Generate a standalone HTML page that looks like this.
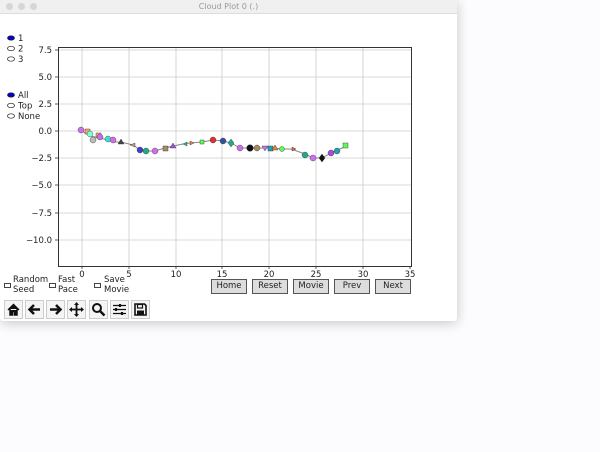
<!DOCTYPE html>
<html><head><style>
body{margin:0;width:600px;height:452px;background:#fcfcfe;font-family:"DejaVu Sans","Liberation Sans",sans-serif;overflow:hidden;position:relative}
.win{position:absolute;left:0;top:0;width:457px;height:321px;background:#fff;box-shadow:0 2px 12px rgba(0,0,0,.22);border-radius:0 0 3px 3px}
.tb{height:13px;background:#f0f0f0;border-bottom:1px solid #ddd;font-size:8px;color:#999;text-align:center;line-height:13px;position:relative}
.dot{position:absolute;top:3px;width:7px;height:7px;border-radius:50%;background:#d6d6d6}
.t{position:absolute;font-size:8.5px;color:#222;line-height:9.5px}
.btn{position:absolute;top:279px;height:15px;width:36px;background:#ddd;border:1px solid #555;box-sizing:border-box;font-size:8.5px;text-align:center;line-height:13px;color:#222}
.ic{position:absolute;top:300px;width:19px;height:19px;border:1px solid #ccc;box-sizing:border-box;background:#f4f4f4}
.cb{position:absolute;width:5px;height:3px;border:1px solid #444}
</style></head><body>
<div class="win">
<div class="tb"><span class="dot" style="left:6px"></span><span class="dot" style="left:18px"></span><span class="dot" style="left:30px"></span>Cloud Plot 0 (.)</div>
<svg width="457" height="300" style="position:absolute;left:0;top:0" font-family="DejaVu Sans, Liberation Sans, sans-serif" font-size="8.5" fill="#222">
<g fill="#0000cc" stroke="#222" stroke-width="0.7">
<ellipse cx="11" cy="38" rx="3.5" ry="2.2"/><ellipse cx="11" cy="48.5" rx="3.5" ry="2.2" fill="#fff"/><ellipse cx="11" cy="59" rx="3.5" ry="2.2" fill="#fff"/>
<ellipse cx="11" cy="95" rx="3.5" ry="2.2"/><ellipse cx="11" cy="105.5" rx="3.5" ry="2.2" fill="#fff"/><ellipse cx="11" cy="116" rx="3.5" ry="2.2" fill="#fff"/>
</g>
<text x="18" y="41">1</text><text x="18" y="51.5">2</text><text x="18" y="62">3</text>
<text x="18" y="98">All</text><text x="18" y="108.5">Top</text><text x="18" y="119">None</text>
<g stroke="#ccc" stroke-width="0.8">
<line x1="82" y1="47" x2="82" y2="266"/><line x1="129" y1="47" x2="129" y2="266"/><line x1="176" y1="47" x2="176" y2="266"/><line x1="222" y1="47" x2="222" y2="266"/><line x1="269" y1="47" x2="269" y2="266"/><line x1="316" y1="47" x2="316" y2="266"/><line x1="363" y1="47" x2="363" y2="266"/>
<line x1="58" y1="50" x2="412" y2="50"/><line x1="58" y1="77" x2="412" y2="77"/><line x1="58" y1="104" x2="412" y2="104"/><line x1="58" y1="131" x2="412" y2="131"/><line x1="58" y1="158" x2="412" y2="158"/><line x1="58" y1="185" x2="412" y2="185"/><line x1="58" y1="213" x2="412" y2="213"/><line x1="58" y1="240" x2="412" y2="240"/>
</g>
<g stroke="#333" stroke-width="0.8">
<line x1="82" y1="266" x2="82" y2="269"/><line x1="129" y1="266" x2="129" y2="269"/><line x1="176" y1="266" x2="176" y2="269"/><line x1="222" y1="266" x2="222" y2="269"/><line x1="269" y1="266" x2="269" y2="269"/><line x1="316" y1="266" x2="316" y2="269"/><line x1="363" y1="266" x2="363" y2="269"/><line x1="410" y1="266" x2="410" y2="269"/>
<line x1="55" y1="50" x2="58" y2="50"/><line x1="55" y1="77" x2="58" y2="77"/><line x1="55" y1="104" x2="58" y2="104"/><line x1="55" y1="131" x2="58" y2="131"/><line x1="55" y1="158" x2="58" y2="158"/><line x1="55" y1="185" x2="58" y2="185"/><line x1="55" y1="213" x2="58" y2="213"/><line x1="55" y1="240" x2="58" y2="240"/>
</g>
<rect x="58.5" y="47.5" width="353" height="219" fill="none" stroke="#333" stroke-width="1"/>
<g text-anchor="end"><text x="52" y="53">7.5</text><text x="52" y="80">5.0</text><text x="52" y="107">2.5</text><text x="52" y="134">0.0</text><text x="52" y="161">−2.5</text><text x="52" y="188">−5.0</text><text x="52" y="216">−7.5</text><text x="52" y="243">−10.0</text></g>
<g text-anchor="middle"><text x="82" y="277">0</text><text x="129" y="277">5</text><text x="176" y="277">10</text><text x="222" y="277">15</text><text x="269" y="277">20</text><text x="316" y="277">25</text><text x="363" y="277">30</text><text x="410" y="277">35</text></g>
<polyline fill="none" stroke="#888" stroke-width="1" points="80,130 85,133 90,136 95,137 100,138 108,140 113,142 121,142 133,145 140,150 144,151 152,151 158,150 165,148 173,146 183,144 190,143 202,142 213,140 223,141 231,143 240,148 250,148 257,148 265,148 272,148 282,149 291,149 305,154 313,158 322,158 331,153 337,150 345,147"/>
<g stroke="#333" stroke-width="0.4">
<circle cx="81" cy="130" r="3" fill="#d36cf0"/><rect x="85" y="129" width="5" height="5" fill="#f4a460"/><circle cx="90" cy="134" r="3" fill="#7fffd4"/><circle cx="93" cy="140" r="3" fill="#bbb"/><rect x="96" y="133" width="5" height="5" fill="#f4a460"/><circle cx="100" cy="137" r="3" fill="#c070f0"/><circle cx="108" cy="139" r="3" fill="#40e0d0"/><circle cx="113" cy="140" r="3" fill="#d36cf0"/><polygon points="121,139 124,144 118,144" fill="#444"/><polygon points="130,145 135,143 135,147" fill="#b98"/><circle cx="140" cy="150" r="3" fill="#4040d0"/><circle cx="146" cy="151" r="3" fill="#2a8"/><circle cx="155" cy="151" r="3" fill="#d36cf0"/><rect x="163" y="146" width="5" height="5" fill="#a88a60"/><polygon points="173,143 176,148 170,148" fill="#a050e0"/><polygon points="183,144 187,142 187,146" fill="#20b2aa"/><polygon points="190,141 194,143 190,145" fill="#f08030"/><rect x="200" y="140" width="4" height="4" fill="#5f5"/><circle cx="213" cy="140" r="3" fill="#e03030"/><circle cx="223" cy="141" r="3" fill="#3050a0"/><polygon points="231,139 234,143 231,147 228,143" fill="#2a8"/><circle cx="240" cy="148" r="3" fill="#d36cf0"/><circle cx="250" cy="148" r="3.3" fill="#111"/><circle cx="257" cy="148" r="3" fill="#a88a60"/><polygon points="262,146 268,146 265,151" fill="#c070f0"/><rect x="268" y="146" width="5" height="5" fill="#20a0b0"/><polygon points="275,145 278,150 272,150" fill="#f08030"/><circle cx="282" cy="149" r="2.5" fill="#5f5"/><polygon points="292,147 296,149 292,151" fill="#e06040"/><circle cx="305" cy="155" r="3" fill="#2a8"/><circle cx="313" cy="158" r="3" fill="#d36cf0"/><polygon points="322,154 325,158 322,162 319,158" fill="#111"/><circle cx="331" cy="153" r="3" fill="#a050e0"/><circle cx="337" cy="151" r="3" fill="#20a0b0"/><rect x="343" y="143" width="5" height="5" fill="#5f5"/>
</g>
</svg>
<span class="cb" style="left:4px;top:283px"></span><div class="t" style="left:13px;top:276px">Random<br>Seed</div>
<span class="cb" style="left:49px;top:283px"></span><div class="t" style="left:58px;top:276px">Fast<br>Pace</div>
<span class="cb" style="left:94px;top:283px"></span><div class="t" style="left:104px;top:276px">Save<br>Movie</div>
<div class="btn" style="left:211px">Home</div><div class="btn" style="left:252px">Reset</div><div class="btn" style="left:293px">Movie</div><div class="btn" style="left:334px">Prev</div><div class="btn" style="left:375px">Next</div>
<div class="ic" style="left:4px"><svg width="17" height="17"><path d="M3 9 L8.5 3.5 L14 9 M5 8 V14 H7.5 V10.5 H9.5 V14 H12 V8" fill="#111" stroke="#111" stroke-width="1.5"/></svg></div>
<div class="ic" style="left:25px"><svg width="17" height="17"><path d="M14 8.5 H4 M8 4 L3.5 8.5 L8 13" fill="none" stroke="#111" stroke-width="2.5"/></svg></div>
<div class="ic" style="left:46px"><svg width="17" height="17"><path d="M3 8.5 H13 M9 4 L13.5 8.5 L9 13" fill="none" stroke="#111" stroke-width="2.5"/></svg></div>
<div class="ic" style="left:67px"><svg width="17" height="17"><path d="M8.5 2 V15 M2 8.5 H15" stroke="#111" stroke-width="1.8"/><path d="M8.5 1 L6 4 H11Z M8.5 16 L6 13 H11Z M1 8.5 L4 6 V11Z M16 8.5 L13 6 V11Z" fill="#111"/></svg></div>
<div class="ic" style="left:89px"><svg width="17" height="17"><circle cx="7" cy="7" r="4" fill="none" stroke="#111" stroke-width="2"/><path d="M10 10 L14.5 14.5" stroke="#111" stroke-width="2.5"/></svg></div>
<div class="ic" style="left:110px"><svg width="17" height="17"><path d="M2 4.5 H15 M2 8.5 H15 M2 12.5 H15" stroke="#111" stroke-width="1.3"/><path d="M9 3 V6 M5 7 V10 M11 11 V14" stroke="#111" stroke-width="2.2"/></svg></div>
<div class="ic" style="left:131px"><svg width="17" height="17"><path d="M3 3 H12.5 L14 4.5 V14 H3Z" fill="none" stroke="#111" stroke-width="1.6"/><rect x="5.5" y="3.5" width="5" height="3.5" fill="none" stroke="#111" stroke-width="1.2"/><rect x="5" y="9.5" width="7" height="4" fill="#111"/></svg></div>
</div>
</body></html>
